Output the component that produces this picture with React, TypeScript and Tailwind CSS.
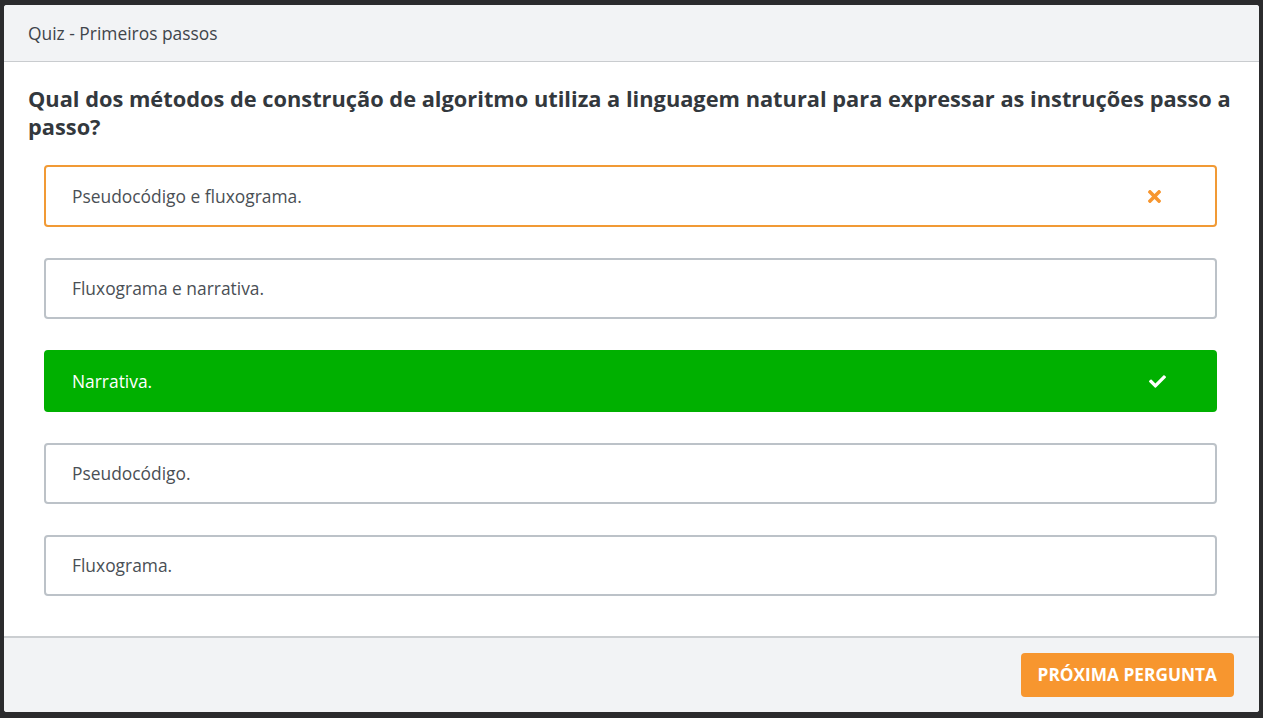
import { FaCheck, FaTimes } from 'react-icons/fa';

type OptionState = 'wrong' | 'correct' | 'idle';

const options: { label: string; state: OptionState }[] = [
  { label: 'Pseudocódigo e fluxograma.', state: 'wrong' },
  { label: 'Fluxograma e narrativa.', state: 'idle' },
  { label: 'Narrativa.', state: 'correct' },
  { label: 'Pseudocódigo.', state: 'idle' },
  { label: 'Fluxograma.', state: 'idle' },
];

const OptionRow = ({ label, state }: { label: string; state: OptionState }) => {
  if (state === 'correct') {
    return (
      <div className="flex h-[62px] items-center justify-between rounded-[4px] border-2 border-[#00b000] bg-[#00b000] pl-[26px] pr-[49px] text-white">
        <span className="text-[17.4px]">{label}</span>
        <FaCheck size={17} className="text-white" />
      </div>
    );
  }
  if (state === 'wrong') {
    return (
      <div className="flex h-[62px] items-center justify-between rounded-[4px] border-2 border-[#f19a35] bg-white pl-[26px] pr-[51px] text-[#4a4f55]">
        <span className="text-[17.4px]">{label}</span>
        <FaTimes size={19} className="text-[#f7962f]" />
      </div>
    );
  }
  return (
    <div className="flex h-[61px] items-center rounded-[4px] border-2 border-[#bcc2c8] bg-white pl-[26px] text-[#4a4f55]">
      <span className="text-[17.4px]">{label}</span>
    </div>
  );
};

export default function App() {
  return (
    <div className="min-h-[718px] bg-[#2b2b2d] px-[4px] pt-[5px] pb-[7px] font-['Open_Sans',sans-serif]">
      <div className="flex flex-col overflow-hidden rounded-[3px] bg-white">
        {/* Header */}
        <div className="flex h-[57px] items-center border-b border-[#c9cccf] bg-[#f2f3f5] px-[24px]">
          <span className="text-[17.4px] text-[#3f454b]">Quiz - Primeiros passos</span>
        </div>

        {/* Body */}
        <div className="px-[24px] pt-[23px] pb-[40px]">
          <h1 className="text-[21.8px] font-bold leading-[28px] text-[#33383d]">
            Qual dos métodos de construção de algoritmo utiliza a linguagem natural para expressar as instruções passo a passo?
          </h1>
          <div className="mt-[24px] ml-[16px] mr-[18px] flex flex-col gap-[31px]">
            {options.map((o) => (
              <OptionRow key={o.label} label={o.label} state={o.state} />
            ))}
          </div>
        </div>

        {/* Footer */}
        <div className="flex h-[76px] items-center justify-end border-t-2 border-[#cbced1] bg-[#f2f3f5] px-[25px]">
          <button className="h-[44px] rounded-[4px] bg-[#f7962f] px-[17px] text-[17.3px] font-bold uppercase text-white">
            Próxima pergunta
          </button>
        </div>
      </div>
    </div>
  );
}
